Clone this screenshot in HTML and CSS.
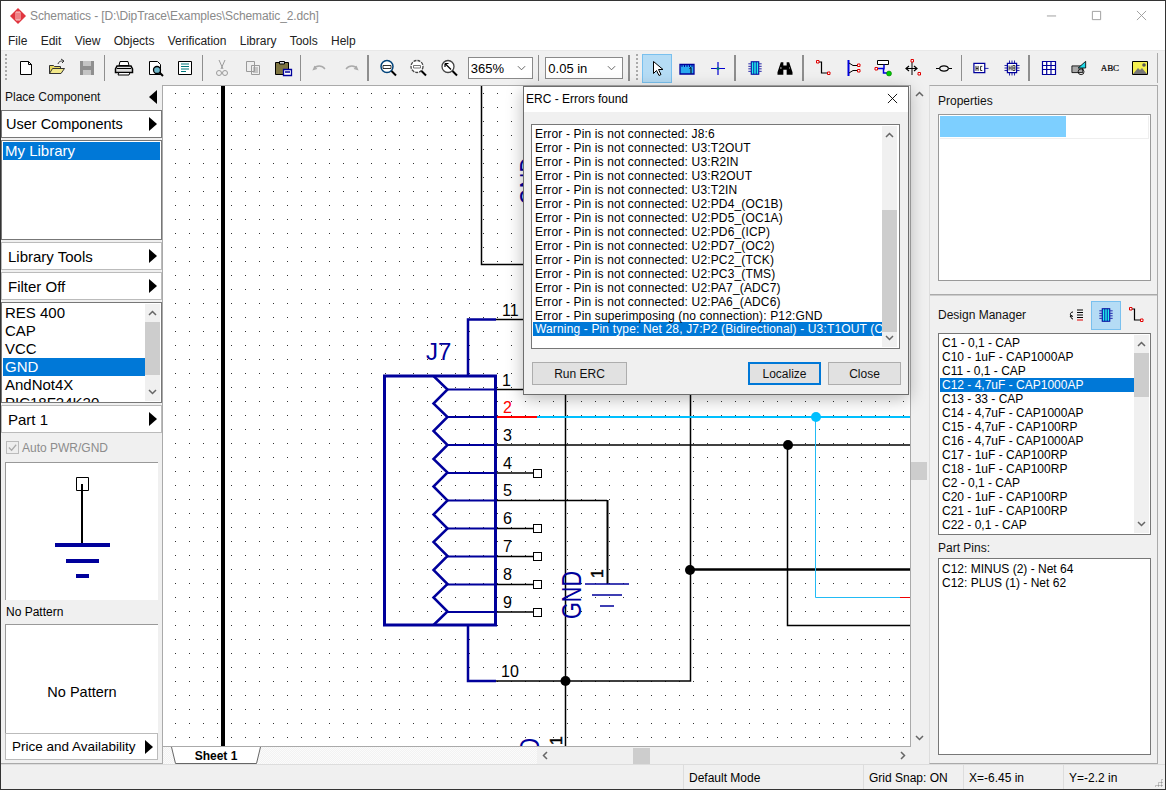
FILE: index.html
```html
<!DOCTYPE html>
<html lang="en">
<head>
  <meta charset="UTF-8" />
  <title>Schematics</title>
  <link rel="stylesheet" href="styles.css">
</head>
<body>
<div class="window">
  <div class="titlebar">
    <svg class="app-logo" viewBox="0 0 16 16"><path d="M8 0l8 8-8 8-8-8z" fill="#e0353f"/><path d="M6 4h4v8H6z" fill="none" stroke="#fbd0d0"/><path d="M8 4v8" stroke="#fbd0d0"/></svg>
    <span class="title-text">Schematics - [D:\DipTrace\Examples\Schematic_2.dch]</span>
    <div class="win-btns">
      <svg viewBox="0 0 12 12"><path d="M1 6.500h10" stroke="#999"/></svg>
      <svg viewBox="0 0 12 12"><path d="M1.500 1.500h9v9h-9z" fill="none" stroke="#999"/></svg>
      <svg viewBox="0 0 12 12"><path d="M1 1l10 10M11 1L1 11" stroke="#999"/></svg>
    </div>
  </div>

  <div class="menubar">
    <span>File</span><span>Edit</span><span>View</span><span>Objects</span><span>Verification</span><span>Library</span><span>Tools</span><span>Help</span>
  </div>

  <div class="toolbar">
    <i class="grip"></i>
    <div class="tb"><svg viewBox="0 0 24 24"><path d="M6.500 5.500h8l3 3v10h-11z" fill="#fff" stroke="#000"/><path d="M14.500 5.500v3h3" fill="none" stroke="#000"/></svg></div>
    <div class="tb"><svg viewBox="0 0 24 24"><path d="M4.500 9.500h4l1 1h6v7h-11z" fill="#e8d860" stroke="#333"/><path d="M4.500 17.500l3-5h12l-3.500 5z" fill="#f3e98a" stroke="#333"/><path d="M13 8c1-3 3-3 5-3M16 3l3 2-2 2" fill="none" stroke="#333"/></svg></div>
    <div class="tb"><svg viewBox="0 0 24 24"><path d="M5 5h14v14H5z" fill="#8f8f8f"/><path d="M8 5h8v5H8zM8 14h8v5H8z" fill="#c4c4c4"/></svg></div>
    <i class="sep"></i>
    <div class="tb"><svg viewBox="0 0 24 24"><path d="M8 5.500h8l1 4H7z" fill="#fff" stroke="#000"/><path d="M5 10h14l1.500 3v3.500h-17V13z" fill="#ddd" stroke="#000" stroke-width="1.500"/><path d="M7 16.500h11l-1 2.500H6z" fill="#fff" stroke="#000"/><path d="M5 12.500h14" stroke="#000"/></svg></div>
    <div class="tb"><svg viewBox="0 0 24 24"><path d="M6.500 5.500h8l3 3v10h-11z" fill="#fff" stroke="#000"/><circle cx="14" cy="14" r="3.500" fill="#6fb6c8" stroke="#000" stroke-width="1.300"/><path d="M16.500 16.500l3.500 3.500" stroke="#000" stroke-width="2"/></svg></div>
    <div class="tb"><svg viewBox="0 0 24 24"><path d="M5.500 5.500h13v13h-13z" fill="#fff" stroke="#000"/><path d="M8 8h8M8 10.500h8M8 13h8M8 15.500h5" stroke="#00797c"/></svg></div>
    <i class="sep"></i>
    <div class="tb"><svg viewBox="0 0 24 24"><path d="M9 4l4 9M15 4l-4 9" stroke="#9a9a9a" fill="none"/><circle cx="9" cy="17" r="2.500" fill="none" stroke="#9a9a9a"/><circle cx="15" cy="17" r="2.500" fill="none" stroke="#9a9a9a"/></svg></div>
    <div class="tb"><svg viewBox="0 0 24 24"><path d="M5.500 5.500h8v10h-8zM10.500 9.500h8v9h-8z" fill="#eee" stroke="#9a9a9a"/><path d="M12 12h5M12 14h5M12 16h5" stroke="#9a9a9a"/></svg></div>
    <div class="tb"><svg viewBox="0 0 24 24"><path d="M4.500 6.500h13v12h-13z" fill="#7d7440" stroke="#000"/><path d="M8.500 5.500h5v2.500h-5z" fill="#ddd" stroke="#000"/><path d="M12.500 13.500h8v6h-8z" fill="#fff" stroke="#00009b" stroke-width="1.300"/><path d="M14 16h5" stroke="#00009b" stroke-width="1.500"/></svg></div>
    <i class="sep"></i>
    <div class="tb"><svg viewBox="0 0 24 24"><path d="M7 10l-1.500 3.500L9 12.500M6 13c2-4 8-4 11 0" fill="none" stroke="#aaa" stroke-width="1.300"/></svg></div>
    <div class="tb"><svg viewBox="0 0 24 24"><path d="M17 10l1.500 3.500L15 12.500M18 13c-2-4-8-4-11 0" fill="none" stroke="#aaa" stroke-width="1.300"/></svg></div>
    <i class="sep"></i>
    <div class="tb"><svg viewBox="0 0 24 24"><circle cx="11" cy="10.500" r="6" fill="#fff" stroke="#00437a" stroke-width="1.500"/><path d="M7 9.500h8v3H7z" fill="none" stroke="#000" stroke-width=".8"/><path d="M15.500 15l4.500 4.500" stroke="#000" stroke-width="2"/></svg></div>
    <div class="tb"><svg viewBox="0 0 24 24"><circle cx="11" cy="10.500" r="6" fill="#fff" stroke="#444" stroke-width="1.300" stroke-dasharray="3 1"/><path d="M7.500 9.500h7v2.500h-7z" fill="none" stroke="#555" stroke-width=".8"/><path d="M15.500 15l4.500 4.500" stroke="#000" stroke-width="2"/></svg></div>
    <div class="tb"><svg viewBox="0 0 24 24"><circle cx="11" cy="10.500" r="6" fill="#fff" stroke="#444" stroke-width="1.300"/><path d="M8 7.500l6 6M8 7.500v3.500M8 7.500h3.500" fill="none" stroke="#000" stroke-width="1.200"/><path d="M15.500 15l4.500 4.500" stroke="#000" stroke-width="2"/></svg></div>
    <div class="combo combo-zoom"><span>365%</span><svg viewBox="0 0 10 6"><path d="M1 1l4 4 4-4" fill="none" stroke="#555"/></svg></div>
    <i class="sep sep-wide"></i>
    <div class="combo combo-grid"><span>0.05 in</span><svg viewBox="0 0 10 6"><path d="M1 1l4 4 4-4" fill="none" stroke="#555"/></svg></div>
    <i class="sep sep-wide"></i>
    <i class="grip grip-mid"></i>
    <div class="tb tb-on"><svg viewBox="0 0 24 24"><path d="M8.500 5.500v12l3-3 2.500 5 2-1-2.500-5h4.500z" fill="#fff" stroke="#000"/></svg></div>
    <div class="tb"><svg viewBox="0 0 24 24"><path d="M5 8.500h14v9.500H5z" fill="#29a9ef" stroke="#00009b" stroke-width="1.300"/><path d="M7 8v3M9.500 8v3M12 8v3M14.500 8v3M17 8v3" stroke="#00009b"/><path d="M14.500 12.500l1.500-1v6" fill="none" stroke="#000"/></svg></div>
    <div class="tb"><svg viewBox="0 0 24 24"><path d="M5 12.500h14M12 6v13" stroke="#0000d0" stroke-width="1.200"/><circle cx="12" cy="12.500" r="1.500" fill="#00797c"/></svg></div>
    <i class="sep"></i>
    <div class="tb sm"><svg viewBox="0 0 24 24"><path d="M7.500 4.500h9v15h-9z" fill="#2ee" stroke="#00009b" stroke-width="1.300"/><path d="M10.500 4.500v15M13.500 4.500v15" stroke="#00009b"/><path d="M4 7h3M4 10h3M4 13h3M4 16h3M17 7h3M17 10h3M17 13h3M17 16h3" stroke="#00009b"/></svg></div>
    <div class="tb sm"><svg viewBox="0 0 24 24"><path d="M7 5h3v4h4V5h3l4 12v3h-7v-6h-4v6H3v-3z" fill="#000"/><path d="M6 12h2M17 12h1" stroke="#fff"/></svg></div>
    <i class="sep"></i>
    <div class="tb"><svg viewBox="0 0 24 24"><path d="M7 6h3.500v11H17" fill="none" stroke="#000" stroke-width="1.200"/><path d="M5.500 4.500h2.500v2.500H5.500zM16.500 16h2.500v2.500h-2.500z" fill="#fff" stroke="#e00000"/></svg></div>
    <div class="tb"><svg viewBox="0 0 24 24"><path d="M7.500 4v16" stroke="#0000e0" stroke-width="2"/><path d="M8 7l4 2.500h4M8 17l4-2.500h4" fill="none" stroke="#000"/><path d="M16.500 8h2.500v2.500h-2.500zM16.500 13.500h2.500V16h-2.500z" fill="#fff" stroke="#e00000"/></svg></div>
    <div class="tb"><svg viewBox="0 0 24 24"><path d="M6.500 4.500h11v4h-11z" fill="#fff" stroke="#000"/><path d="M13 8.500v5M7 12.500h5.500v4.500H17" fill="none" stroke="#0000e0" stroke-width="1.500"/><path d="M4 11.500h2.500V14H4z" fill="#fff" stroke="#e00000"/><circle cx="18" cy="17.500" r="2.500" fill="#0c0" stroke="#060" stroke-width=".5"/></svg></div>
    <div class="tb"><svg viewBox="0 0 24 24"><path d="M4 12.500h11M7 10l-3 2.500L7 15M12 10l3 2.500-3 2.500" fill="none" stroke="#000" stroke-width="1.200"/><path d="M10 5v14" stroke="#000"/><path d="M9 3.500h2.500V6H9zM16 16.500h2.500V19H16z" fill="#fff" stroke="#e00000"/></svg></div>
    <div class="tb"><svg viewBox="0 0 24 24"><path d="M4 12.500h3.500M16.500 12.500H20" stroke="#000" stroke-width="1.200"/><path d="M7.500 12.500c1-3.500 8-3.500 9 0M7.500 12.500c1 3.500 8 3.500 9 0" fill="none" stroke="#000" stroke-width="1.200"/></svg></div>
    <i class="sep"></i>
    <div class="tb sm"><svg viewBox="0 0 24 24"><path d="M3.500 6.500h13v11h-13z" fill="#fff" stroke="#00009b" stroke-width="1.500"/><path d="M16.500 12.500H21" stroke="#00009b"/><path d="M6 9.500v6M6 12.500h2.500M8.500 9.500v6M13.500 10h-2v5h2" fill="none" stroke="#000"/></svg></div>
    <div class="tb sm"><svg viewBox="0 0 24 24"><path d="M6.500 6.500h11v11h-11z" fill="#fff" stroke="#00009b" stroke-width="1.500"/><path d="M3 9h3M3 12h3M3 15h3M18 9h3M18 12h3M18 15h3M9 3v3M12 3v3M15 3v3M9 18v3M12 18v3M15 18v3" stroke="#00009b"/><path d="M8.500 9v6M8.500 12h2.500M11 9v6M13 9h2.500v6H13zM13 12h2.500" fill="none" stroke="#000" stroke-width=".9"/></svg></div>
    <i class="sep"></i>
    <div class="tb"><svg viewBox="0 0 24 24"><path d="M5.500 5.500h13v13h-13z" fill="#fff" stroke="#00009b" stroke-width="1.200"/><path d="M5.500 9.500h13M5.500 13.500h13M9.700 5.500v13M14 5.500v13" stroke="#00009b" stroke-width="1.200"/></svg></div>
    <div class="tb sm"><svg viewBox="0 0 24 24"><path d="M3.500 9.500h13v8h-13z" fill="#a8a8a8" stroke="#000"/><path d="M11 12l9-8v8z" fill="#1fd8e8" stroke="#000"/><circle cx="14.500" cy="16.500" r="3.500" fill="none" stroke="#000"/></svg></div>
    <div class="tb"><span class="abc">ABC</span></div>
    <div class="tb"><svg viewBox="0 0 24 24"><path d="M4.500 5.500h15v13h-15z" fill="#f5f050" stroke="#000"/><path d="M5 18l5-6 2 2 2-2 5 6z" fill="#777"/><circle cx="16" cy="9" r="1.800" fill="#555"/></svg></div>
    <i class="tb-end"></i>
  </div>

  <div class="body">
    <aside class="left">
      <div class="head">Place Component <b class="tri tri-l"></b></div>
      <div class="drop drop-dark">User Components <b class="tri"></b></div>
      <div class="list list-lib"><div class="rows"><div class="row sel">My Library</div></div></div>
      <div class="drop">Library Tools <b class="tri"></b></div>
      <div class="drop">Filter Off <b class="tri"></b></div>
      <div class="list list-comp">
        <div class="rows">
          <div class="row">RES 400</div>
          <div class="row">CAP</div>
          <div class="row">VCC</div>
          <div class="row sel">GND</div>
          <div class="row">AndNot4X</div>
          <div class="row">PIC18F24K20</div>
        </div>
        <div class="vbar">
          <svg class="chev" viewBox="0 0 9 6"><path d="M1 5l3.500-3.500L8 5" fill="none" stroke="#666" stroke-width="1.500"/></svg>
          <div class="thumb thumb-comp"></div>
          <svg class="chev chev-end" viewBox="0 0 9 6"><path d="M1 1l3.500 3.500L8 1" fill="none" stroke="#666" stroke-width="1.500"/></svg>
        </div>
      </div>
      <div class="drop">Part 1 <b class="tri"></b></div>
      <label class="check"><i class="box"><svg viewBox="0 0 12 12"><path d="M2 6l3 3 5-6" fill="none" stroke="#aaa" stroke-width="1.300"/></svg></i>Auto PWR/GND</label>
      <div class="preview">
        <svg viewBox="0 0 153 137">
          <path d="M70.500 14.500h12v13h-12z" fill="#fff" stroke="#000"/>
          <path d="M76 21v61" stroke="#000" stroke-width="2"/>
          <path d="M49 82h55" stroke="#00009b" stroke-width="4"/>
          <path d="M60 98h33" stroke="#00009b" stroke-width="4"/>
          <path d="M70 113h13" stroke="#00009b" stroke-width="4"/>
        </svg>
      </div>
      <div class="sub-label">No Pattern</div>
      <div class="pattern">No Pattern</div>
      <div class="drop drop-price">Price and Availability <b class="tri"></b></div>
    </aside>

    <main class="center">
      <div class="canvas-row">
        <div class="canvas">
          <svg class="schem" viewBox="163 86 747 660">
            <defs>
              <pattern id="dots" x="175" y="93" width="14" height="14" patternUnits="userSpaceOnUse"><rect width="1" height="1" fill="#333"/></pattern>
            </defs>
            <rect x="163" y="86" width="747" height="660" fill="#fff"/>
            <rect x="163" y="86" width="747" height="660" fill="url(#dots)"/>
            <path d="M223 86v660" stroke="#000" stroke-width="4"/>

            <!-- wires -->
            <g fill="none" stroke="#000" stroke-width="1.500">
              <path d="M481.500 86v178.500H523"/>
              <path d="M496 319.500h27"/>
              <path d="M496 389.500h27"/>
              <path d="M496 445h414"/>
              <path d="M496 473h37M496 528.500h37M496 556.500h37M496 584.500h37M496 612h37"/>
              <path d="M496 500.500h111"/>
              <path d="M496 681h194.500V395"/>
              <path d="M565.500 395v351"/>
              <path d="M787.500 445v180.500H910"/>
            </g>
            <path d="M607.500 500v84" stroke="#000" stroke-width="2" fill="none"/>
            <path d="M690 569.500h220" stroke="#000" stroke-width="2.500" fill="none"/>
            <path d="M537 417h373" stroke="#00c0ff" stroke-width="2" fill="none"/>
            <path d="M815.500 417v180.500H900" stroke="#22bbf5" stroke-width="1" fill="none"/>
            <path d="M900 597.500h10" stroke="#e00" stroke-width="1" fill="none"/>
            <path d="M496 417h41" stroke="#f00" stroke-width="2" fill="none"/>
            <circle cx="816" cy="417" r="5" fill="#00c0ff"/>
            <circle cx="788" cy="445" r="5" fill="#000"/>
            <circle cx="690" cy="570" r="5" fill="#000"/>
            <circle cx="565.500" cy="681" r="5" fill="#000"/>
            <g fill="#fff" stroke="#000" stroke-width="1">
              <rect x="533.500" y="469.500" width="8" height="8"/>
              <rect x="533.500" y="524.500" width="8" height="8"/>
              <rect x="533.500" y="552.500" width="8" height="8"/>
              <rect x="533.500" y="580.500" width="8" height="8"/>
              <rect x="533.500" y="608.500" width="8" height="8"/>
            </g>

            <!-- J7 -->
            <g fill="none" stroke="#00009b">
              <rect x="384.500" y="376" width="111" height="249" stroke-width="3"/>
              <path d="M433.500 376l14 13.500-14 14 14 13.500-14 14 14 14-14 14 14 13.500-14 14 14 14-14 14 14 14-14 13.500 14 14-14 14 14 14-14 13.500 14 14-14 13.500" stroke-width="2.500"/>
              <path d="M447 389.500h49M447 417h49M447 445h49M447 473h49M447 500.500h49M447 528.500h49M447 556.500h49M447 584.500h49M447 612h49" stroke-width="2"/>
              <path d="M468 376v-56.500h28" stroke-width="2.500"/>
              <path d="M468 625v56h28" stroke-width="2.500"/>
              <path d="M585 584h44M592 595h30M600 606h14" stroke-width="1.500"/>
            </g>
            <g class="lbl">
              <text x="502" y="316">11</text>
              <text x="502" y="386">1</text>
              <text x="503" y="413" class="red">2</text>
              <text x="503" y="441">3</text>
              <text x="503" y="469">4</text>
              <text x="503" y="496">5</text>
              <text x="503" y="524">6</text>
              <text x="503" y="552">7</text>
              <text x="503" y="580">8</text>
              <text x="503" y="608">9</text>
              <text x="501" y="677">10</text>
            </g>
            <text x="426" y="360" class="j7">J7</text>
            <text transform="translate(581 619) rotate(-90)" class="gnd" textLength="48" lengthAdjust="spacingAndGlyphs">GND</text>
            <text transform="translate(539 205) rotate(-90)" class="gnd" textLength="48" lengthAdjust="spacingAndGlyphs">GND</text>
            <text transform="translate(539 786) rotate(-90)" class="gnd" textLength="48" lengthAdjust="spacingAndGlyphs">GND</text>
            <text transform="translate(603 578) rotate(-90)" class="pin1">1</text>
            <text transform="translate(562 745) rotate(-90)" class="pin1">1</text>
          </svg>
        </div>
        <div class="side-bar">
          <svg class="chev" viewBox="0 0 9 6"><path d="M1 5l3.500-3.500L8 5" fill="none" stroke="#666" stroke-width="1.500"/></svg>
          <div class="thumb thumb-side"></div>
          <svg class="chev chev-end" viewBox="0 0 9 6"><path d="M1 1l3.500 3.500L8 1" fill="none" stroke="#666" stroke-width="1.500"/></svg>
        </div>
      </div>
      <div class="tabs">
        <div class="tab-gap-l"></div>
        <div class="tab">
          <svg class="tab-shape" viewBox="0 0 90 17"><path d="M.5 0l4 16.500h81l4-16.500" fill="#fff" stroke="#666"/></svg>
          <span>Sheet 1</span>
        </div>
        <div class="tab-fill"></div>
        <div class="hbar">
          <svg class="chev-r" viewBox="0 0 6 9"><path d="M5 1L1.500 4.500 5 8" fill="none" stroke="#666" stroke-width="1.500"/></svg>
          <div class="thumb-h"></div>
          <svg class="chev-r" viewBox="0 0 6 9"><path d="M1 1l3.500 3.500L1 8" fill="none" stroke="#666" stroke-width="1.500"/></svg>
        </div>
      </div>

      <div class="dialog">
        <div class="dlg-title"><span>ERC - Errors found</span><svg viewBox="0 0 12 12"><path d="M1 1l10 10M11 1L1 11" stroke="#000"/></svg></div>
        <div class="dlg-body">
          <div class="list erc-list">
            <div class="rows">
              <div class="row">Error - Pin is not connected: J8:6</div>
              <div class="row">Error - Pin is not connected: U3:T2OUT</div>
              <div class="row">Error - Pin is not connected: U3:R2IN</div>
              <div class="row">Error - Pin is not connected: U3:R2OUT</div>
              <div class="row">Error - Pin is not connected: U3:T2IN</div>
              <div class="row">Error - Pin is not connected: U2:PD4_(OC1B)</div>
              <div class="row">Error - Pin is not connected: U2:PD5_(OC1A)</div>
              <div class="row">Error - Pin is not connected: U2:PD6_(ICP)</div>
              <div class="row">Error - Pin is not connected: U2:PD7_(OC2)</div>
              <div class="row">Error - Pin is not connected: U2:PC2_(TCK)</div>
              <div class="row">Error - Pin is not connected: U2:PC3_(TMS)</div>
              <div class="row">Error - Pin is not connected: U2:PA7_(ADC7)</div>
              <div class="row">Error - Pin is not connected: U2:PA6_(ADC6)</div>
              <div class="row">Error - Pin superimposing (no connection): P12:GND</div>
              <div class="row sel">Warning - Pin type: Net 28, J7:P2 (Bidirectional) - U3:T1OUT (Output)</div>
            </div>
            <div class="vbar">
              <svg class="chev" viewBox="0 0 9 6"><path d="M1 5l3.500-3.500L8 5" fill="none" stroke="#666" stroke-width="1.500"/></svg>
              <div class="thumb thumb-erc"></div>
              <svg class="chev chev-end" viewBox="0 0 9 6"><path d="M1 1l3.500 3.500L8 1" fill="none" stroke="#666" stroke-width="1.500"/></svg>
            </div>
          </div>
          <div class="dlg-btns">
            <button class="btn btn-run">Run ERC</button>
            <span class="spacer"></span>
            <button class="btn btn-loc">Localize</button>
            <button class="btn btn-close">Close</button>
          </div>
        </div>
      </div>
    </main>

    <aside class="right">
      <section class="props">
        <div class="r-label">Properties</div>
        <div class="props-box"><div class="props-row"><div class="props-fill"></div></div></div>
      </section>
      <section class="manager">
        <div class="mgr-head">
          <span class="r-label">Design Manager</span>
          <div class="mgr-tools">
            <div class="mgr-btn"><svg viewBox="0 0 24 24"><path d="M13 7h6M13 9.500h6M13 12h6M13 14.500h6" stroke="#000"/><path d="M13 17h6" stroke="#d00"/><path d="M9 9c-3 0-3 3-2 4M9 16c-2 0-2-2-2-3M6 14l1.500-2 1 2" fill="none" stroke="#000"/></svg></div>
            <div class="mgr-btn tb-on sm"><svg viewBox="0 0 24 24"><path d="M7.500 4.500h9v15h-9z" fill="#2ee" stroke="#00009b" stroke-width="1.300"/><path d="M10.500 4.500v15M13.500 4.500v15" stroke="#00009b"/><path d="M4 7h3M4 10h3M4 13h3M4 16h3M17 7h3M17 10h3M17 13h3M17 16h3" stroke="#00009b"/></svg></div>
            <div class="mgr-btn"><svg viewBox="0 0 24 24"><path d="M7 6h3.500v11H17" fill="none" stroke="#000" stroke-width="1.200"/><path d="M5.500 4.500h2.500v2.500H5.500zM16.500 16h2.500v2.500h-2.500z" fill="#fff" stroke="#e00000"/></svg></div>
          </div>
        </div>
        <div class="list mgr-list">
          <div class="rows">
            <div class="row">C1 - 0,1 - CAP</div>
            <div class="row">C10 - 1uF - CAP1000AP</div>
            <div class="row">C11 - 0,1 - CAP</div>
            <div class="row sel">C12 - 4,7uF - CAP1000AP</div>
            <div class="row">C13 - 33 - CAP</div>
            <div class="row">C14 - 4,7uF - CAP1000AP</div>
            <div class="row">C15 - 4,7uF - CAP100RP</div>
            <div class="row">C16 - 4,7uF - CAP1000AP</div>
            <div class="row">C17 - 1uF - CAP100RP</div>
            <div class="row">C18 - 1uF - CAP100RP</div>
            <div class="row">C2 - 0,1 - CAP</div>
            <div class="row">C20 - 1uF - CAP100RP</div>
            <div class="row">C21 - 1uF - CAP100RP</div>
            <div class="row">C22 - 0,1 - CAP</div>
            <div class="row">C23 - 0,1 - CAP</div>
          </div>
          <div class="vbar">
            <svg class="chev" viewBox="0 0 9 6"><path d="M1 5l3.500-3.500L8 5" fill="none" stroke="#666" stroke-width="1.500"/></svg>
            <div class="thumb thumb-mgr"></div>
            <svg class="chev chev-end" viewBox="0 0 9 6"><path d="M1 1l3.500 3.500L8 1" fill="none" stroke="#666" stroke-width="1.500"/></svg>
          </div>
        </div>
        <div class="r-label pins-label">Part Pins:</div>
        <div class="list pins-list">
          <div class="rows">
            <div class="row">C12: MINUS (2) - Net 64</div>
            <div class="row">C12: PLUS (1) - Net 62</div>
          </div>
        </div>
      </section>
    </aside>
  </div>

  <div class="statusbar">
    <div class="st st-a"></div>
    <div class="st st-b">Default Mode</div>
    <div class="st st-c">Grid Snap: ON</div>
    <div class="st st-d">X=-6.45 in</div>
    <div class="st st-e">Y=-2.2 in</div>
    <i class="size-grip"></i>
  </div>
</div>
</body>
</html>
```

FILE: styles.css
```css
* { box-sizing: border-box; }
html, body { margin: 0; height: 100%; }
body { font-family: "Liberation Sans", "Noto Sans", sans-serif; font-size: 12px; color: #000; background: #f0f0f0; overflow: hidden; }
.window { width: 1166px; height: 790px; border: 1px solid #333; display: flex; flex-direction: column; overflow: hidden; }

/* title + menu */
.titlebar { height: 29px; background: #fff; display: flex; align-items: center; padding-left: 9px; flex: none; }
.app-logo { width: 16px; height: 16px; margin-right: 4px; }
.title-text { color: #8a8a8a; font-size: 12px; letter-spacing: -.11px; }
.win-btns { margin-left: auto; display: flex; gap: 34px; padding-right: 18px; }
.win-btns svg { width: 11px; height: 11px; }
.menubar { height: 20px; background: #fff; display: flex; flex: none; padding: 2px 0 0 7px; gap: 13.300px; align-items: center; color: #222; }

/* toolbar */
.toolbar { height: 35px; flex: none; background: #f0f0f0; border-top: 1px solid #e8e8e8; display: flex; align-items: center; padding-left: 4px; }
.grip { width: 3px; height: 28px; margin-right: 3px; flex: none; background-image: linear-gradient(#aaa 50%, transparent 50%); background-size: 2px 4px; background-repeat: repeat-y; }
.grip-mid { margin: 0 3px 0 0; }
.tb { width: 30.350px; height: 29px; flex: none; display: flex; align-items: center; justify-content: center; }
.tb svg { width: 24px; height: 24px; }
.tb.sm svg, .mgr-btn.sm svg { width: 20px; height: 20px; }
.tb-on { background: #b5dcf5; border: 1px solid #79c0ee; }
.sep { width: 1.500px; height: 26px; background: #8e8e8e; flex: none; margin: 0 4px 0 1.500px; }
.sep-wide { margin: 0 6px 0 5px; }
.tb-end { width: 1px; height: 30px; background: #aaa; margin-left: 2px; }
.abc { font-family: "Liberation Serif", serif; font-size: 9px; letter-spacing: -.2px; -webkit-text-stroke: .2px #000; }
.combo { height: 22px; background: #fff; border: 1px solid #8a8a8a; display: flex; align-items: center; justify-content: space-between; padding: 0 6px 0 2px; font-size: 13px; flex: none; }
.combo svg { width: 9px; height: 6px; }
.combo-zoom { width: 65px; margin-left: 4px; }
.combo-grid { width: 78px; }

/* main area */
.body { flex: 1; display: flex; min-height: 0; }
.left { width: 162px; flex: none; background: #f0f0f0; border-right: 1px solid #aaa; display: flex; flex-direction: column; border-bottom: 1px solid #aaa; }
.head { height: 24px; flex: none; padding: 0 5px 0 4px; margin-bottom: 1px; display: flex; justify-content: space-between; align-items: center; color: #111; }
.drop { background: #fff; border: 1px solid #bbb; display: flex; justify-content: space-between; align-items: center; padding: 0 4px 0 6px; height: 28px; flex: none; font-size: 15px; margin-bottom: 2px; }
.drop-dark { border-color: #777; padding-left: 4px; font-size: 14.500px; }
.tri { width: 0; height: 0; border-left: 8px solid #000; border-top: 7px solid transparent; border-bottom: 7px solid transparent; }
.tri-l { border-left: 0; border-right: 8px solid #000; }
.list { background: #fff; border: 1px solid #777; display: flex; overflow: hidden; flex: none; }
.rows { flex: 1; min-width: 0; padding: 1px 0 0 1px; overflow: hidden; }
.row { white-space: nowrap; overflow: hidden; padding-left: 2px; }
.row.sel { background: #0078d7; color: #fff; }
.vbar { width: 15px; flex: none; margin: 1px 1px 1px 0; background: #f0f0f0; display: flex; flex-direction: column; align-items: center; }
.chev { width: 9px; height: 6px; margin: 6px 0; flex: none; }
.chev-end { margin-top: auto; }
.thumb { width: 100%; background: #cdcdcd; flex: none; }

.list-lib { height: 100px; margin-bottom: 2px; }
.list-lib .row { font-size: 15px; height: 18px; line-height: 18px; }
.list-lib .rows { padding: 1px; }
.list-comp { height: 101px; margin-bottom: 2px; }
.list-comp .row { font-size: 15px; height: 18px; line-height: 18px; }
.thumb-comp { height: 53px; }
.check { height: 27px; flex: none; display: flex; align-items: center; gap: 3px; padding: 0 0 2px 5px; color: #8c8c8c; }
.box { width: 13px; height: 13px; border: 1px solid #bbb; background: #eee; }
.box svg { display: block; width: 11px; height: 11px; }
.preview { height: 138px; margin: 0 4px; background: #fff; border-top: 1px solid #999; border-left: 1px solid #999; flex: none; }
.preview svg { display: block; width: 153px; height: 137px; }
.sub-label { height: 24px; flex: none; padding-left: 5px; display: flex; align-items: center; }
.pattern { margin: 0 4px; height: 109px; padding-top: 25px; flex: none; background: #fff; border-top: 1px solid #999; border-left: 1px solid #999; display: flex; align-items: center; justify-content: center; font-size: 14.500px; }
.drop-price { margin: 0 4px; height: 27px; padding: 0 4px 0 6px; font-size: 13.500px; }

/* canvas + dialog */
.center { flex: 1; min-width: 0; position: relative; display: flex; flex-direction: column; }
.canvas-row { flex: 1; display: flex; min-height: 0; }
.canvas { width: 748px; flex: none; border-top: 1px solid #aaa; border-bottom: 1px solid #aaa; border-right: 1px solid #aaa; overflow: hidden; height: 662px; }
.schem { display: block; width: 747px; height: 660px; font-family: "Liberation Sans", sans-serif; }
.lbl text { font-size: 16px; fill: #000; }
.lbl .red { fill: #f00; }
.j7 { font-size: 24px; fill: #00009b; }
.gnd { font-size: 28px; fill: #00009b; }
.pin1 { font-size: 16px; fill: #000; stroke: #000; stroke-width: .4px; }
.side-bar { width: 18px; flex: none; padding-right: 2px; background: #f0f0f0; display: flex; flex-direction: column; align-items: center; position: relative; }
.thumb-side { position: absolute; top: 377px; left: 0; width: 16px; height: 18px; }
.tabs { height: 17px; flex: none; display: flex; background: repeating-conic-gradient(#f2f2f2 0 25%, #fbfbfb 0 50%) 0 0 / 2px 2px; }
.tab-gap-l { width: 8px; }
.tab { width: 90px; height: 17px; position: relative; display: flex; align-items: center; justify-content: center; font-weight: 700; font-size: 12px; }
.tab-shape { position: absolute; inset: 0; width: 90px; height: 17px; }
.tab span { position: relative; }
.tab-fill { flex: 1; }
.hbar { width: 392px; flex: none; background: #f0f0f0; position: relative; display: flex; align-items: center; justify-content: space-between; padding: 0 23px 0 5px; }
.thumb-h { position: absolute; left: 96px; width: 17px; top: 1px; bottom: 0; background: #cdcdcd; }
.chev-r { width: 6px; height: 9px; }

.dialog { position: absolute; left: 360px; top: 1px; width: 386px; height: 309px; background: #f0f0f0; border: 1px solid #6d6d6d; box-shadow: 0 4px 16px rgba(0,0,0,.28); display: flex; flex-direction: column; }
.dlg-title { height: 25px; background: #fff; display: flex; justify-content: space-between; align-items: center; padding: 0 10px 2px 2px; flex: none; }
.dlg-title svg { width: 11px; height: 11px; }
.dlg-body { flex: 1; padding: 12px 8px 9px 7px; display: flex; flex-direction: column; }
.erc-list { height: 225px; }
.erc-list .row { height: 14px; line-height: 14px; letter-spacing: .15px; }
.erc-list .rows { padding: 2px 0 0 1px; }
.erc-list .row.sel { margin-top: -1px; }
.erc-list .vbar { margin-right: 2px; }
.thumb-erc { height: 122px; margin-top: 66px; }
.dlg-btns { display: flex; margin: 13px -1px 0 0; padding-left: 1px; gap: 7px; }
.spacer { flex: 1; }
.btn { height: 23px; font: inherit; background: #e1e1e1; border: 1px solid #adadad; padding: 0; color: #111; }
.btn-run { width: 95px; }
.btn-loc { width: 73px; border: 2px solid #0078d7; }
.btn-close { width: 73px; }

/* right panel */
.right { width: 229px; flex: none; background: #f0f0f0; display: flex; flex-direction: column; border-right: 1px solid #aaa; border-top: 1px solid #aaa; border-bottom: 1px solid #aaa; border-left: 1px solid #ddd; margin-right: 7px; }
.props { height: 209px; flex: none; padding: 8px 6px 0 8px; border-bottom: 1px solid #aaa; }
.r-label { color: #111; }
.props-box { height: 167px; margin-top: 6px; background: #fff; border: 1px solid #999; padding: 1px; }
.props-row { height: 23px; border-right: 1px solid #eee; border-bottom: 1px solid #eee; }
.props-fill { width: 126px; height: 21px; background: #7dcfff; }
.manager { flex: 1; padding: 4px 6px 0 8px; border-top: 1px solid #ccc; display: flex; flex-direction: column; }
.mgr-head { display: flex; justify-content: space-between; align-items: center; height: 30px; flex: none; margin-bottom: 3px; }
.mgr-tools { display: flex; }
.mgr-btn { width: 30px; height: 29px; display: flex; align-items: center; justify-content: center; }
.mgr-btn svg { width: 24px; height: 24px; }
.mgr-list { height: 202px; }
.mgr-list .rows { padding-top: 2px; }
.mgr-list .row, .pins-list .row { height: 14px; line-height: 14px; }
.thumb-mgr { height: 44px; }
.pins-label { margin-top: 6px; margin-bottom: 3px; }
.pins-list { height: 197px; }
.pins-list .rows { padding-top: 3px; }

/* status */
.statusbar { flex: none; height: 25px; display: flex; background: #f0f0f0; align-items: center; border-top: 1px solid #ddd; position: relative; }
.st { height: 100%; display: flex; align-items: center; padding: 2px 0 0 5px; border-right: 1px solid #ddd; }
.st-a { width: 683px; }
.st-b { width: 180px; }
.st-c { width: 100px; }
.st-d { width: 100px; }
.st-e { flex: 1; border-right: 0; }
.size-grip { position: absolute; right: 2px; bottom: 2px; width: 9px; height: 9px; background-image: radial-gradient(#999 45%, transparent 50%); background-size: 3px 3px; clip-path: polygon(100% 0, 100% 100%, 0 100%); }
```
